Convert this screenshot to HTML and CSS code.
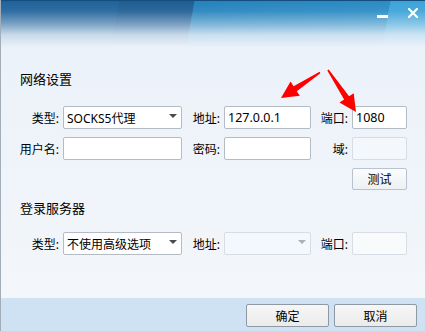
FILE: index.html
```html
<!DOCTYPE html>
<html lang="zh-CN">
<head>
<meta charset="utf-8">
<title>代理设置</title>
<link rel="stylesheet" href="styles.css">
</head>
<body>
<div class="window">
  <div class="titlebar">
    <div class="controls">
      <span class="min"></span>
      <svg class="close" width="10" height="10" viewBox="0 0 10 10"><path d="M1 1 L9 9 M9 1 L1 9" stroke="#fff" stroke-width="2.2" stroke-linecap="square"/></svg>
    </div>
  </div>
  <div class="content">
    <div class="section-title">网络设置</div>
    <div class="form first">
      <div class="lbl">类型:</div>
      <div class="field select">SOCKS5代理<i class="caret"></i></div>
      <div class="lbl">地址:</div>
      <div class="field">127.0.0.1</div>
      <div class="lbl">端口:</div>
      <div class="field">1080</div>
      <div class="lbl">用户名:</div>
      <div class="field"></div>
      <div class="lbl">密码:</div>
      <div class="field"></div>
      <div class="lbl">域:</div>
      <div class="field disabled"></div>
      <div class="btn-test">测试</div>
    </div>
    <div class="section-title second">登录服务器</div>
    <div class="form">
      <div class="lbl">类型:</div>
      <div class="field select">不使用高级选项<i class="caret"></i></div>
      <div class="lbl">地址:</div>
      <div class="field select disabled"><span></span><i class="caret"></i></div>
      <div class="lbl">端口:</div>
      <div class="field disabled light"></div>
    </div>
  </div>
  <div class="footer">
    <button class="btn">确定</button>
    <button class="btn">取消</button>
  </div>
  <svg class="arrows" width="425" height="331" viewBox="0 0 425 331">
    <polygon points="320.4,73.2 296.8,91.2 299.85,95.8 281,98 290.55,81.6 293.6,86.2 319.6,71.8" fill="#ff0000"/>
    <polygon points="328.7,69.6 349.1,96.2 353.7,93.2 356,112 339.5,102.6 344.1,99.6 327.3,70.4" fill="#ff0000"/>
  </svg>
</div>
</body>
</html>
```
FILE: styles.css
```css
* { box-sizing: border-box; }
html, body { margin: 0; padding: 0; }
body {
  width: 425px;
  height: 331px;
  overflow: hidden;
  font-family: "Noto Sans", "Noto Sans CJK SC", sans-serif;
  font-size: 12px;
  color: #000;
}
.window {
  position: relative;
  width: 425px;
  height: 331px;
  display: flex;
  flex-direction: column;
  border-left: 1px solid #a3adb8;
  background: linear-gradient(#eaf1f9, #f4f7fb);
}
.titlebar {
  height: 48px;
  flex: none;
  border-top: 1px solid #174d7c;
  background:
    linear-gradient(to bottom, rgba(234,241,249,0) 0px, rgba(234,241,249,0.08) 10px, rgba(234,241,249,0.45) 23px, rgba(234,241,249,0.84) 34px, #eaf1f9 46px),
    linear-gradient(100deg, rgba(10,30,70,0) 116px, rgba(10,30,70,0.08) 117px, rgba(10,30,70,0.08) 190px, rgba(10,30,70,0) 191px),
    linear-gradient(100deg, #1f629b 0px, #1f6299 190px, #2482bc 191px, #2a8cc4 383px, #3ba3d8 384px);
  display: flex;
  justify-content: flex-end;
}
.controls {
  display: flex;
  align-items: flex-start;
  padding: 7px 7px 0 0;
}
.min {
  width: 11px;
  height: 3px;
  margin-top: 7px;
  background: #fff;
}
.close { margin-left: 20px; display: block; }
.content {
  flex: 1;
  padding: 23px 0 0 15px;
}
.section-title {
  font-size: 13px;
  line-height: 16px;
  padding-left: 4px;
}
.section-title.second { margin-top: 10px; }
.form {
  display: grid;
  grid-template-columns: 47px 119px 42px 87px 41px 55px;
  grid-template-rows: 23px;
  grid-auto-rows: 23px;
  row-gap: 8px;
  margin-top: 16px;
}
.form.first {
  margin-top: 19px;
  grid-template-rows: 23px 23px 22px;
}
.lbl {
  display: flex;
  align-items: center;
  justify-content: flex-end;
  padding-right: 4px;
  white-space: nowrap;
}
.field {
  border: 1px solid #b4bbc4;
  border-radius: 2px;
  background: #fff;
  display: flex;
  align-items: center;
  padding: 0 3px;
  white-space: nowrap;
  font-size: 12.5px;
}
.field.select { justify-content: space-between; padding-right: 4px; font-size: 12px; }
.field.disabled { background: #f4f7fb; border-color: #d6dde5; }
.field.light { background: #f8fafc; }
.caret {
  width: 0;
  height: 0;
  border-left: 4px solid transparent;
  border-right: 4px solid transparent;
  border-top: 4px solid #4a4a4a;
  margin-top: -3px;
}
.disabled .caret { border-top-color: #a9afb6; }
.btn-test {
  grid-column: 6;
  border: 1px solid #b9c3ce;
  border-radius: 2px;
  background: linear-gradient(#fbfcfd, #edf1f5);
  display: flex;
  align-items: center;
  justify-content: center;
}
.footer {
  height: 33px;
  flex: none;
  background: #cfe2f3;
  display: flex;
  justify-content: flex-end;
  gap: 5px;
  padding: 6px 8px 0 0;
}
.btn {
  width: 83px;
  height: 23px;
  padding: 0;
  border: 1px solid #8e99a4;
  border-radius: 2px;
  background: linear-gradient(#f6f6f6, #ebebeb);
  font-family: inherit;
  font-size: 12px;
  color: #000;
}
.arrows {
  position: absolute;
  left: -1px;
  top: 0;
  pointer-events: none;
}
```
